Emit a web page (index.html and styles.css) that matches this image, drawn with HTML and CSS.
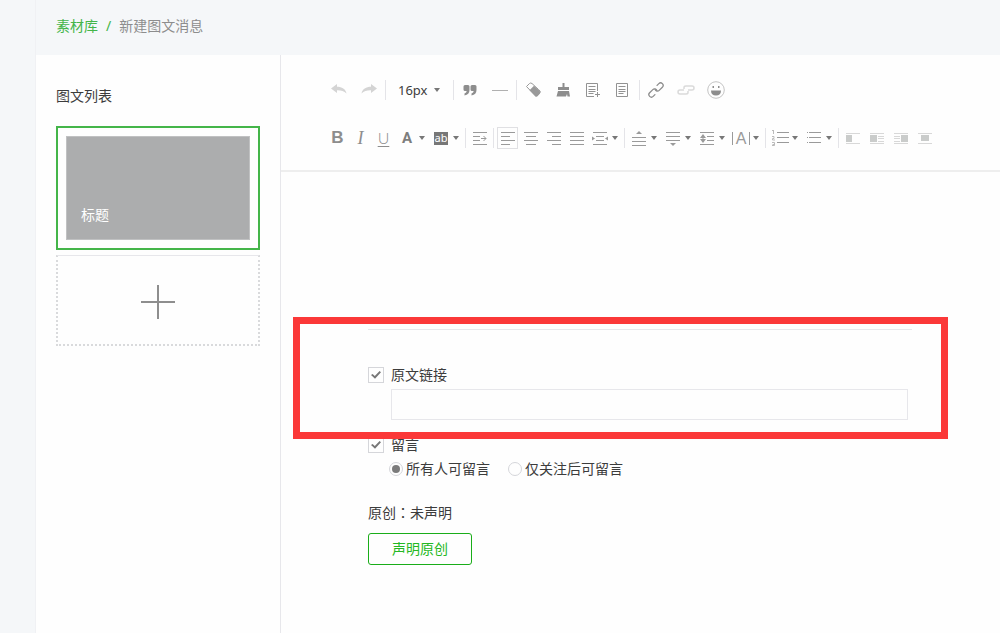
FILE: index.html
```html
<!DOCTYPE html>
<html lang="zh-CN">
<head>
<meta charset="utf-8">
<meta name="viewport" content="width=device-width, initial-scale=1">
<title>新建图文消息</title>
<link rel="stylesheet" href="styles.css">
</head>
<body>
<div class="page">
  <header class="crumbs">
    <a href="#">素材库</a><span class="slash">/</span><span class="current">新建图文消息</span>
  </header>
  <div class="columns">
    <aside class="sidebar">
      <h2 class="sidebar-title">图文列表</h2>
      <div class="card"><div class="cover">标题</div></div>
      <button class="add" type="button" aria-label="添加图文">
        <svg width="36" height="36" viewBox="0 0 36 36"><path d="M18 1v34M1 18h34" stroke="#8e8e8e" stroke-width="2"/></svg>
      </button>
    </aside>
    <main class="editor">
      <div class="toolbar">
        <div class="row row-main">
          <button class="tool" type="button" aria-label="撤销"><svg width="18" height="18" viewBox="0 0 18 18"><path d="M1 7.500 7 3v2.800c5 0 8.500 2.200 9.500 6.700C14 10 11 9.200 7 9.300V12z" fill="#d4d4d4"/></svg></button>
          <button class="tool" type="button" aria-label="重做"><svg width="18" height="18" viewBox="0 0 18 18"><path d="M17 7.500 11 3v2.800c-5 0-8.500 2.200-9.500 6.700C4 10 7 9.200 11 9.300V12z" fill="#d4d4d4"/></svg></button>
          <span class="sep"></span>
          <span class="size"><select aria-label="字号"><option>16px</option></select><span class="caret"></span></span>
          <span class="sep"></span>
          <button class="tool" type="button" aria-label="引用"><svg width="18" height="18" viewBox="0 0 18 18"><path d="M4 4h3q1.500 0 1.500 1.500V9q0 4.500-5 5.500v-2q2.100-.6 2.200-2.500H4q-1.500 0-1.500-1.500v-3Q2.500 4 4 4zM11 4h3q1.500 0 1.500 1.500V9q0 4.500-5 5.500v-2q2.100-.6 2.200-2.500H11q-1.500 0-1.500-1.500v-3Q9.500 4 11 4z" fill="#8d8d8d"/></svg></button>
          <button class="tool" type="button" aria-label="分隔线"><svg width="18" height="18" viewBox="0 0 18 18"><path d="M1 9.500h16" stroke="#b0b0b0"/></svg></button>
          <span class="sep"></span>
          <button class="tool" type="button" aria-label="清除格式"><svg width="18" height="18" viewBox="0 0 18 18"><path d="M5.500 2.500 2.500 5.500 12 15.500 16 11.500Q17 10 14.500 8.500L8 2.500Q6.500 1.500 5.500 2.500z" fill="#fff" stroke="#999"/><path d="M10 4.800 5.500 9.200l6 6q1 .8 2 0l2.500-2.700q1-1.500-1-3.200z" fill="#999"/></svg></button>
          <button class="tool" type="button" aria-label="格式刷"><svg width="18" height="18" viewBox="0 0 18 18"><path d="M8.500 2h2v4H15v3H4V6h4.500z" fill="#8d8d8d"/><path d="M4 10h11l1 5.500h-2.500L13 13l-1 2.500H2.500z" fill="#8d8d8d"/></svg></button>
          <button class="tool" type="button" aria-label="插入模板"><svg width="18" height="18" viewBox="0 0 18 18"><path d="M10 15.500H2.500v-13h11V10" fill="none" stroke="#929292"/><path d="M4.500 5.500h7M4.500 8.500h7M4.500 10.500h7M4.500 12.500h5M13.500 11v5M11 13.500h5" stroke="#929292"/></svg></button>
          <button class="tool" type="button" aria-label="模板"><svg width="18" height="18" viewBox="0 0 18 18"><path d="M2.500 2.500h11v13h-11zM4.500 5.500h7M4.500 8.500h7M4.500 10.500h7M4.500 12.500h5" fill="none" stroke="#929292"/></svg></button>
          <span class="sep"></span>
          <button class="tool" type="button" aria-label="超链接"><svg width="18" height="18" viewBox="0 0 18 18"><g transform="rotate(-45 9 9)" fill="none" stroke="#8d8d8d" stroke-width="1.300" stroke-linecap="round"><path d="M5 11.500H2.500a2.500 2.500 0 0 1 0-5h4.500a2.500 2.500 0 0 1 2.300 3.500"/><path d="M13 6.500h2.500a2.500 2.500 0 0 1 0 5H11A2.500 2.500 0 0 1 8.700 8"/></g></svg></button>
          <button class="tool" type="button" aria-label="取消链接"><svg width="18" height="18" viewBox="0 0 18 18"><path d="M7 8V6.500q0-1.500 2-1.500h6q2 0 2 2t-2 2h-4M11 10v1.500q0 1.500-2 1.500H3q-2 0-2-2t2-2h4" fill="none" stroke="#dadada" stroke-width="1.500"/></svg></button>
          <button class="tool" type="button" aria-label="表情"><svg width="18" height="18" viewBox="0 0 18 18"><circle cx="9" cy="9" r="8.300" fill="none" stroke="#c4c4c4"/><path d="M4 9.500h10q0 5-5 5t-5-5zM5.500 5h1.500v2H5.500zM11 5h1.500v2H11z" fill="#8d8d8d"/></svg></button>
        </div>
        <div class="row row-text">
          <button class="btn letter bold" type="button" aria-label="加粗">B</button>
          <button class="btn letter italic" type="button" aria-label="斜体">I</button>
          <button class="btn letter under" type="button" aria-label="下划线">U</button>
          <button class="drop" type="button" aria-label="字体颜色"><span class="glyph color">A</span><span class="caret"></span></button>
          <button class="drop" type="button" aria-label="背景色"><span class="glyph"><span class="mark">ab</span></span><span class="caret"></span></button>
          <span class="sep"></span>
          <button class="btn" type="button" aria-label="首行缩进"><svg class="ic" viewBox="0 0 16 16"><path d="M1 2.500h14M1 6.500h7M1 10.500h7M1 14.500h14M9 8.500h5M11.500 6l2.500 2.500L11.500 11"/></svg></button>
          <span class="sep"></span>
          <button class="btn on" type="button" aria-label="左对齐"><svg class="ic" viewBox="0 0 16 16"><path d="M1 2.500h14M1 6.500h9M1 10.500h14M1 14.500h9"/></svg></button>
          <button class="btn" type="button" aria-label="居中"><svg class="ic" viewBox="0 0 16 16"><path d="M1 2.500h14M3 6.500h10M1 10.500h14M3 14.500h10"/></svg></button>
          <button class="btn" type="button" aria-label="右对齐"><svg class="ic" viewBox="0 0 16 16"><path d="M1 2.500h14M6 6.500h9M1 10.500h14M6 14.500h9"/></svg></button>
          <button class="btn" type="button" aria-label="两端对齐"><svg class="ic" viewBox="0 0 16 16"><path d="M1 2.500h14M1 6.500h14M1 10.500h14M1 14.500h14"/></svg></button>
          <button class="drop" type="button" aria-label="两端缩进"><span class="glyph"><svg class="ic" viewBox="0 0 16 16"><path d="M1 2.500h14M4 6.500h8M4 10.500h8M1 14.500h14"/><path class="solid" d="M0 6.500 3 8.500 0 10.500zM16 6.500 13 8.500l3 2z"/></svg></span><span class="caret"></span></button>
          <span class="sep"></span>
          <button class="drop" type="button" aria-label="段前距"><span class="glyph"><svg class="ic" viewBox="0 0 16 16"><path d="M1 7.500h14M1 11.500h14M1 15.500h14"/><path class="solid" d="M8 1 5 4h6z"/></svg></span><span class="caret"></span></button>
          <button class="drop" type="button" aria-label="段后距"><span class="glyph"><svg class="ic" viewBox="0 0 16 16"><path d="M1 2.500h14M1 6.500h14M1 10.500h14"/><path class="solid" d="M8 16 5 13h6z"/></svg></span><span class="caret"></span></button>
          <button class="drop" type="button" aria-label="行间距"><span class="glyph"><svg class="ic" viewBox="0 0 16 16"><path d="M1 2.500h14M8 6.500h7M8 10.500h7M1 14.500h14M4 6v5"/><path class="solid" d="M4 4 1 8h6zM4 13 1 9h6z"/></svg></span><span class="caret"></span></button>
          <button class="drop" type="button" aria-label="字间距"><span class="glyph spacing">A</span><span class="caret"></span></button>
          <span class="sep"></span>
          <button class="drop" type="button" aria-label="有序列表"><span class="glyph"><svg class="ic wide" viewBox="0 0 18 16"><path d="M6 2.500h12M6 7.500h12M6 12.500h12"/><path stroke="#bbb" d="M2.500 0v4M1 .5h2M1 6.500h2v2H1.500v1.500H4M1 12.500h2.500v3H1M1.500 14.500h2"/></svg></span><span class="caret"></span></button>
          <button class="drop" type="button" aria-label="无序列表"><span class="glyph"><svg class="ic" viewBox="0 0 16 16"><path d="M1 2.500h1M3 2.500h12M1 7.500h1M3 7.500h12M1 12.500h1M3 12.500h12"/></svg></span><span class="caret"></span></button>
          <span class="sep"></span>
          <button class="btn off" type="button" aria-label="左浮动" disabled><svg class="ic" viewBox="0 0 16 16"><path d="M1 3.500h14M1 13.500h14"/><path class="solid" d="M1 5h6v7H1z"/></svg></button>
          <button class="btn off" type="button" aria-label="左环绕" disabled><svg class="ic" viewBox="0 0 16 16"><path d="M1 3.500h14M9 6.500h6M9 8.500h6M9 11.500h6M1 13.500h14"/><path class="solid" d="M1 5h7v7H1z"/></svg></button>
          <button class="btn off" type="button" aria-label="右环绕" disabled><svg class="ic" viewBox="0 0 16 16"><path d="M1 3.500h14M1 6.500h6M1 8.500h6M1 11.500h6M1 13.500h14"/><path class="solid" d="M8 5h7v7H8z"/></svg></button>
          <button class="btn off" type="button" aria-label="居中浮动" disabled><svg class="ic" viewBox="0 0 16 16"><path d="M1 3.500h14M1 13.500h14"/><path class="solid" d="M4 5h8v6H4z"/></svg></button>
        </div>
      </div>
      <form class="settings">
        <section class="link">
          <label class="option"><input type="checkbox" checked>原文链接</label>
          <input class="url" type="text" aria-label="原文链接地址">
          <div class="highlight"></div>
        </section>
        <label class="option"><input type="checkbox" checked>留言</label>
        <div class="choices">
          <label><input type="radio" name="comment" checked>所有人可留言</label>
          <label><input type="radio" name="comment">仅关注后可留言</label>
        </div>
        <p class="origin">原创<span lang="zh-TW">：</span>未声明</p>
        <button class="declare" type="button">声明原创</button>
      </form>
    </main>
  </div>
</div>
</body>
</html>
```

FILE: styles.css
```css
* { box-sizing: border-box; }

body {
  margin: 0;
  background: #f5f7f9;
  color: #3c3c3c;
  font: 14px/20px "Noto Sans", "Noto Sans CJK SC", sans-serif;
}

button, input, select { margin: 0; font: inherit; color: inherit; }
button { padding: 0; border: 0; background: none; }
svg { display: block; flex: none; }

.page {
  display: flex;
  flex-direction: column;
  min-height: 100vh;
  margin-left: 35px;
  border-left: 1px solid #f0f1f4;
}

.crumbs { display: flex; height: 55px; padding: 16px 20px; }
.crumbs a { color: #44b549; text-decoration: none; }
.slash { margin: 0 8px; color: #44b549; }
.current { color: #8d8d8d; }

.columns { display: flex; flex: 1; background: #fefefe; }

.sidebar {
  flex: none;
  width: 245px;
  padding: 31px 20px;
  border-right: 1px solid #e7e7eb;
}
.sidebar-title { margin: 0 0 20px; font-size: 14px; font-weight: 400; }
.card { padding: 8px; border: 2px solid #44b549; }
.cover {
  display: flex;
  align-items: flex-end;
  height: 104px;
  padding: 14px;
  border: 1px solid #c0c1c2;
  background: #acadae;
  color: #fff;
}
.add {
  display: flex;
  align-items: center;
  justify-content: center;
  width: 100%;
  height: 91px;
  margin-top: 5px;
  padding-top: 4px;
  border: 2px dotted #d9dadc;
  border-top: 1px solid #e7e7eb;
}

.editor { flex: 1; min-width: 0; }

.toolbar {
  padding: 20px 0 20px 43px;
  border-bottom: 2px solid #eee;
}
.row { display: flex; align-items: center; }
.row-main { height: 30px; }
.row-text { height: 24px; margin: 21px 0 0 2px; }

.sep { flex: none; width: 1px; height: 20px; background: #e4e4e8; }
.row-main .sep { margin: 0 1px; }
.row-text .sep { margin: 0 2px; }

.tool { display: flex; justify-content: center; width: 30px; }

.size { display: flex; align-items: center; width: 65px; padding-left: 11px; }
.size select {
  width: 36px;
  padding: 0;
  border: 0;
  background: none;
  appearance: none;
  font-size: 13px;
}

.caret {
  flex: none;
  border: 3px solid transparent;
  border-top: 4px solid #777;
  border-bottom: 0;
}

.btn {
  display: flex;
  flex: none;
  align-items: center;
  justify-content: center;
  width: 21px;
  height: 22px;
  margin: 0 1px;
}
.on { border: 1px solid #e0e0e3; }
.off { width: 22px; }
.drop { display: flex; flex: none; align-items: center; width: 34px; height: 22px; }
.glyph { display: flex; justify-content: center; width: 24px; }

.ic { width: 16px; height: 16px; fill: none; stroke: #9a9a9a; }
.ic.wide { width: 18px; }
.ic .solid { fill: #9a9a9a; stroke: none; }
.off .ic { stroke: #d8d8d8; }
.off .solid { fill: #cacccb; }

.letter { color: #8d8d8d; font-family: "Liberation Sans", sans-serif; font-size: 17px; }
.bold { font-weight: 700; }
.italic { font-family: "Liberation Serif", serif; font-style: italic; font-size: 18px; }
.under {
  font-family: Lato, sans-serif;
  font-size: 16px;
  font-weight: 300;
  text-decoration: underline;
  text-decoration-thickness: 1px;
  text-underline-offset: 2px;
}
.color { color: #7d7d7d; font-family: Roboto, sans-serif; font-size: 15px; font-weight: 700; }
.mark {
  width: 14px;
  height: 13px;
  background: #777;
  color: #fff;
  font-size: 11px;
  line-height: 11px;
  text-align: center;
}
.spacing {
  width: 18px;
  margin: 0 3px;
  border: solid #9a9a9a;
  border-width: 0 1px;
  color: #9a9a9a;
  font-family: "Liberation Sans", sans-serif;
  font-size: 16px;
  line-height: 13px;
}

.settings { max-width: 631px; padding: 157px 0 40px 87px; }

.link {
  position: relative;
  margin-bottom: 15px;
  padding-top: 35px;
  border-top: 1px solid #e7e7eb;
}
.highlight {
  position: absolute;
  inset: -13px -36px -19px -75px;
  border: 7px solid #fb3838;
  pointer-events: none;
}

.option { display: flex; align-items: center; gap: 7px; }
.option input, .choices input {
  display: grid;
  flex: none;
  place-content: center;
  appearance: none;
  width: 16px;
  height: 16px;
  border: 1px solid #d5d6da;
}
.option input:checked::before {
  content: "";
  width: 10px;
  height: 8px;
  background: #777;
  clip-path: polygon(0 50%, 16% 36%, 38% 62%, 86% 0, 100% 16%, 40% 98%);
}

.url {
  display: block;
  width: calc(100% - 27px);
  height: 31px;
  margin: 4px 0 0 23px;
  padding: 0 8px;
  border: 1px solid #e7e7eb;
  background: none;
}

.choices { display: flex; gap: 18px; margin: 4px 0 0 21px; }
.choices label { display: flex; align-items: center; gap: 3px; }
.choices input { width: 14px; height: 14px; border-radius: 50%; }
.choices input:checked::before {
  content: "";
  width: 8px;
  height: 8px;
  border-radius: 50%;
  background: #7b7b7b;
}

.origin { margin: 23px 0 10px; }
.origin span { font-family: "Noto Sans CJK TC", sans-serif; }
.declare {
  width: 104px;
  height: 32px;
  border: 1px solid #1aad19;
  border-radius: 3px;
  color: #24b823;
}
```
